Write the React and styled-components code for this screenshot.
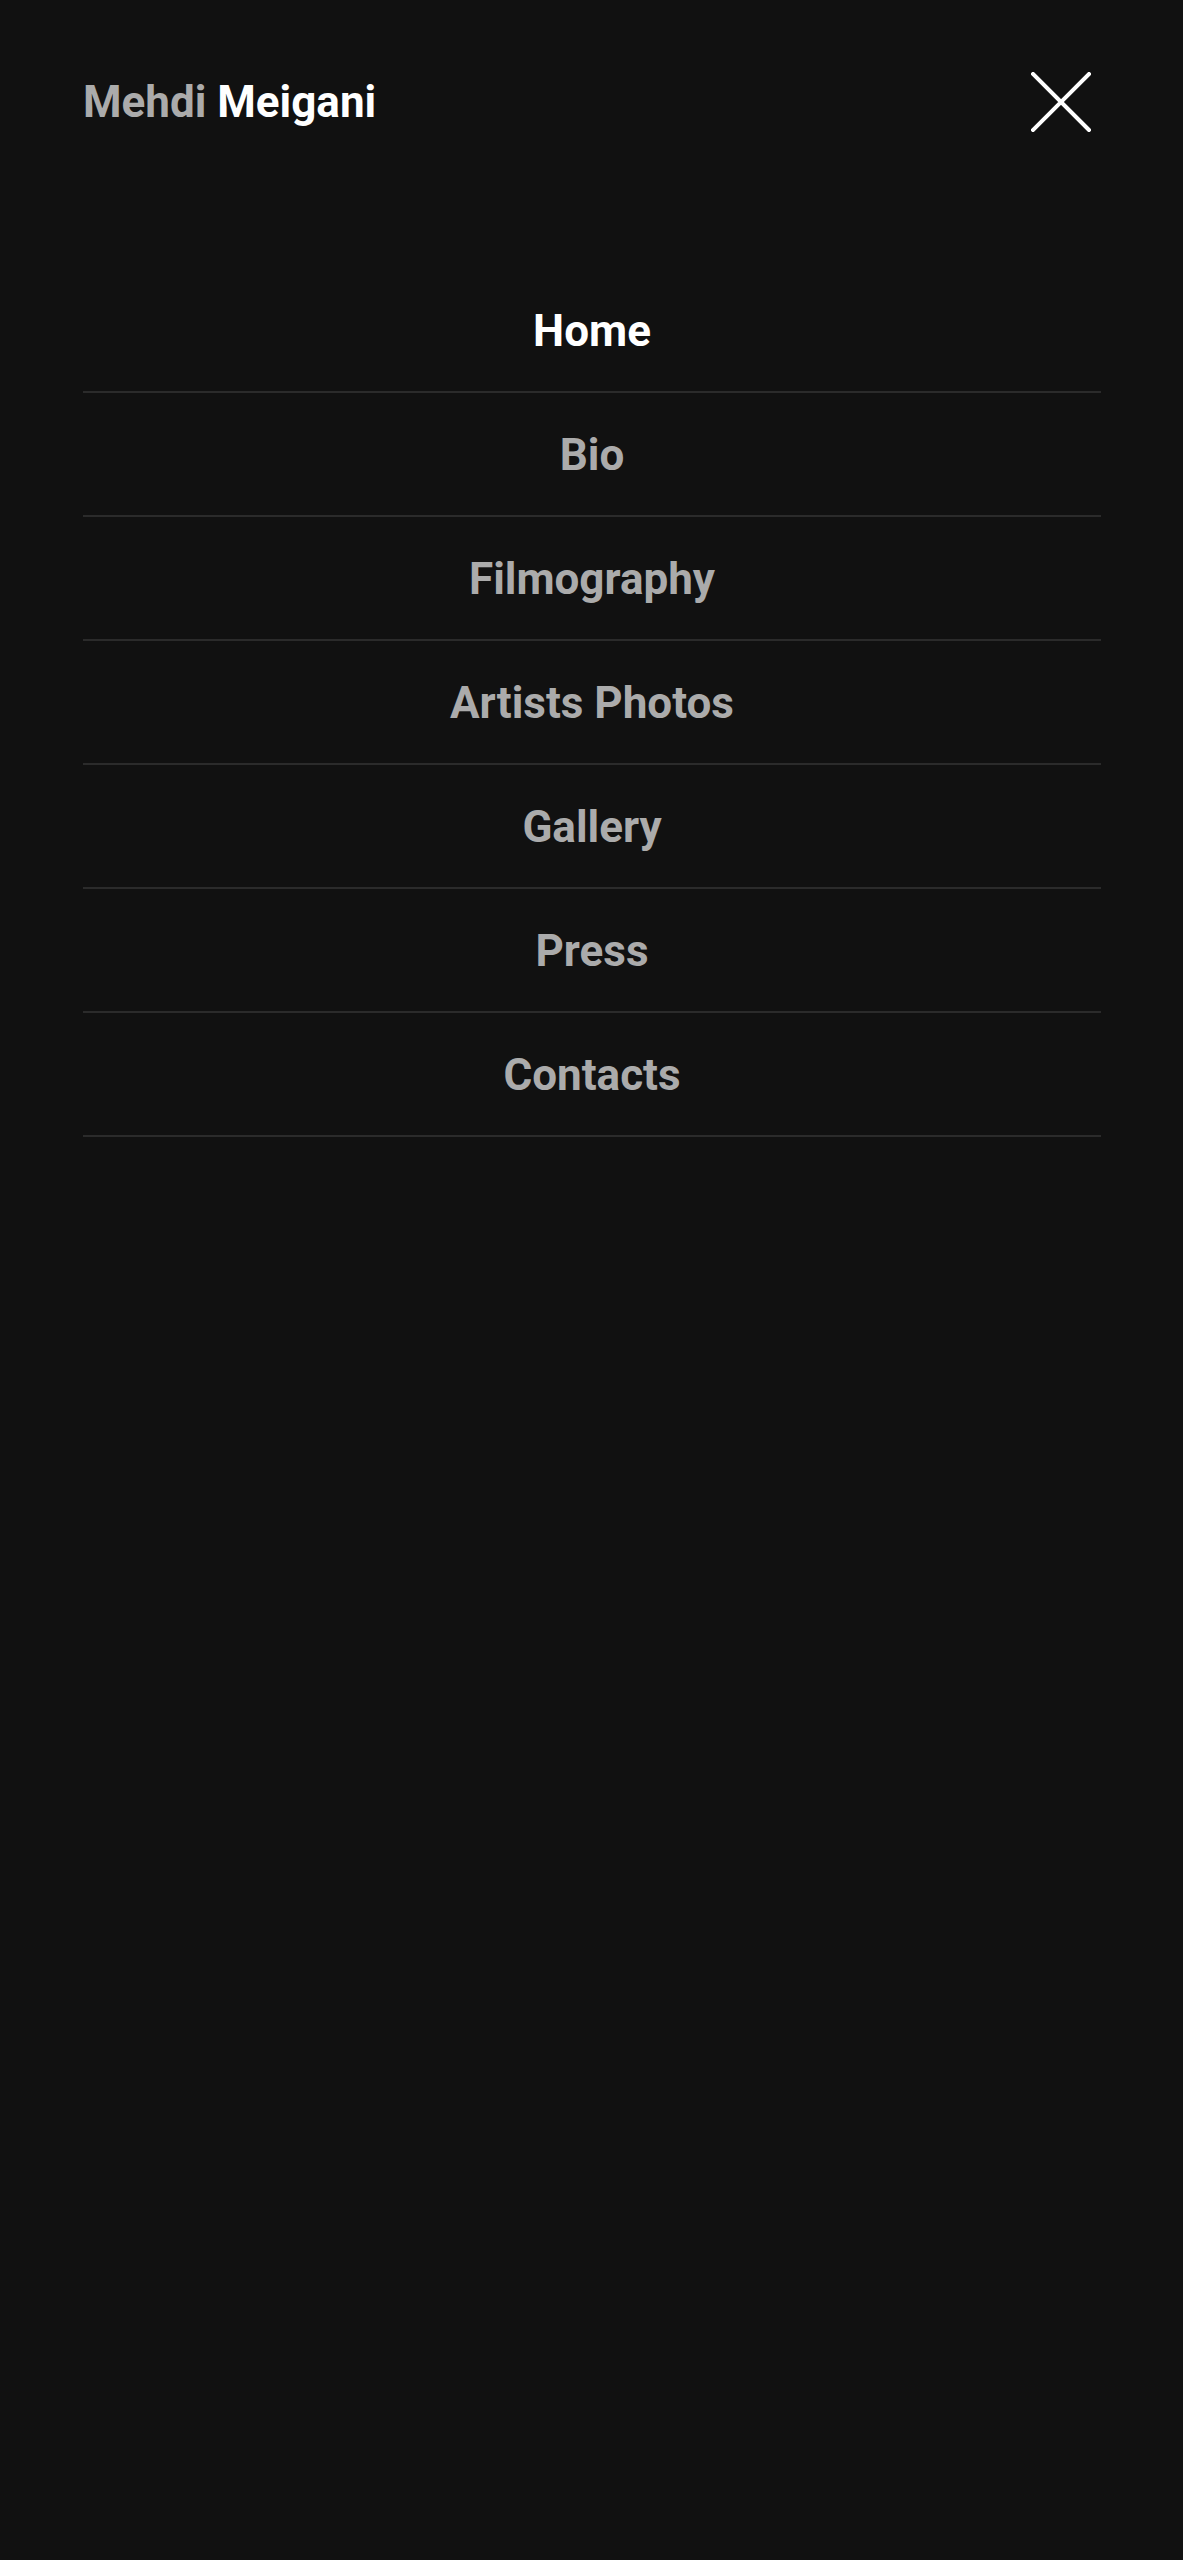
import React from 'react';
import styled, { createGlobalStyle } from 'styled-components';

const GlobalStyle = createGlobalStyle`
    html, body {
        margin: 0;
        padding: 0;
        background: #111111;
    }
    body {
        font-family: Roboto, "Liberation Sans", Arial, sans-serif;
    }
`;

const links = ['Home', 'Bio', 'Filmography', 'Artists Photos', 'Gallery', 'Press', 'Contacts'];

export default function App() {
    return (
        <Page>
            <GlobalStyle />
            <Header>
                <Logo>
                    <span>Mehdi</span> <strong>Meigani</strong>
                </Logo>
                <CloseButton aria-label='Close menu'>
                    <svg width='60' height='60' viewBox='0 0 60 60'>
                        <path d='M2 2 L58 58 M58 2 L2 58' stroke='#ffffff' strokeWidth='4' strokeLinecap='square' />
                    </svg>
                </CloseButton>
            </Header>

            <Nav>
                {links.map((link, i) => (
                    <NavItem key={link} active={i === 0}>{link}</NavItem>
                ))}
            </Nav>
        </Page>
    )
}

const Page = styled.div`
    min-height: 2560px;
    background: #111111;
    padding: 0 82px 0 83px;
    box-sizing: border-box;
`;

const Header = styled.header`
    display: flex;
    align-items: center;
    justify-content: space-between;
    height: 80px;
    padding-top: 62px;
`;

const Logo = styled.div`
    font-size: 44px;
    font-weight: 700;
    line-height: 1;
    color: #ababab;

    strong {
        color: #ffffff;
        font-weight: 700;
    }
`;

const CloseButton = styled.button`
    display: flex;
    align-items: center;
    justify-content: center;
    width: 60px;
    height: 60px;
    padding: 0;
    margin-right: 10px;
    background: none;
    border: none;
    cursor: pointer;
`;

const Nav = styled.nav`
    display: flex;
    flex-direction: column;
    margin-top: 127px;
`;

const NavItem = styled.a`
    display: flex;
    align-items: center;
    justify-content: center;
    height: 122px;
    padding-top: 2px;
    box-sizing: border-box;
    height: 124px;
    border-bottom: 2px solid #2b2b2b;
    font-size: 44px;
    font-weight: 700;
    line-height: 1;
    color: ${props => props.active ? '#ffffff' : '#ababab'};
    text-decoration: none;
`;
